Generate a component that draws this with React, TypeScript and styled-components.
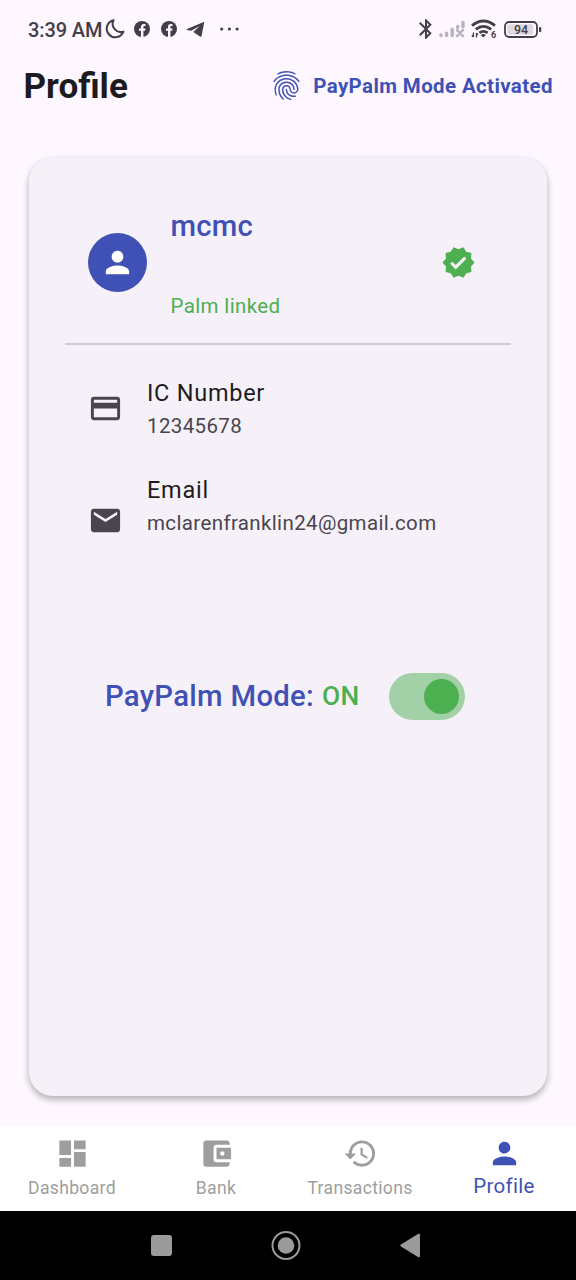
import React from "react";
import styled, { createGlobalStyle } from "styled-components";
import {
  MdAccountBalanceWallet, MdBluetooth, MdCreditCard, MdDashboard, MdEmail,
  MdFingerprint, MdHistory, MdPerson, MdVerified,
} from "react-icons/md";

const INDIGO = "#3f51b5";
const GREEN = "#4caf50";
const STATUS = "#443f47";

const Global = createGlobalStyle`
  * { box-sizing: border-box; }
  html, body { margin: 0; background: #fef7ff; }
  body { font-family: Roboto, "Liberation Sans", sans-serif; }
  svg { display: block; flex: none; }
`;

const Screen = styled.div`
  width: 576px;
  height: 1280px;
  display: flex;
  flex-direction: column;
  background: #fef7ff;
  overflow: hidden;
`;

const StatusBar = styled.div`
  height: 58px;
  padding: 0 34px 0 28px;
  display: flex;
  align-items: center;
  justify-content: space-between;
  color: ${STATUS};
`;

const StatusGroup = styled.div`
  display: flex;
  align-items: center;
`;

const Clock = styled.span`
  width: 77px;
  font-size: 20px;
  font-weight: 500;
  letter-spacing: -0.1px;
  line-height: 24px;
  padding-top: 2px;
  white-space: nowrap;
`;

const Header = styled.header`
  height: 56px;
  padding: 0 24px 0 23.5px;
  display: flex;
  align-items: center;
  justify-content: space-between;
`;

const Title = styled.h1`
  margin: -1px 0 0;
  font-size: 35.1px;
  font-weight: 700;
  color: #1d1b20;
`;

const ModeStatus = styled.div`
  display: flex;
  align-items: center;
  gap: 9px;
  margin-right: -0.8px;
  color: ${INDIGO};
  font-size: 20.5px;
  font-weight: 700;
  letter-spacing: 0.37px;
  white-space: nowrap;
  svg { margin-top: -1px; }
`;

const Card = styled.main`
  flex: 1;
  margin: 44px 29px 30px;
  padding: 47px 36px 0;
  border-radius: 24px;
  background: #f6f1f9;
  box-shadow: 0 4px 6px rgba(0, 0, 0, 0.22), 0 2px 9px rgba(0, 0, 0, 0.1);
`;

const UserRow = styled.section`
  height: 140px;
  padding: 0 35px 0 23px;
  display: flex;
  align-items: flex-start;
  border-bottom: 2px solid #cfc9dc;
`;

const Avatar = styled.div`
  width: 59px;
  height: 59px;
  margin: 27.5px 23.5px 0 0;
  border-radius: 50%;
  display: flex;
  align-items: center;
  justify-content: center;
  background: ${INDIGO};
  color: #fff;
`;

const UserText = styled.div`
  flex: 1;
  display: flex;
  flex-direction: column;
  gap: 44px;
  padding-top: 3px;
`;

const UserName = styled.div`
  font-size: 29.3px;
  line-height: 36px;
  font-weight: 500;
  letter-spacing: 0.2px;
  color: ${INDIGO};
`;

const LinkState = styled.div`
  font-size: 20.5px;
  line-height: 36px;
  letter-spacing: 0.37px;
  color: ${GREEN};
`;

const Verified = styled.div`
  margin-top: 39.5px;
  color: ${GREEN};
`;

const InfoRow = styled.section<{ $drop: number; $top: number }>`
  margin-top: ${(p) => p.$top}px;
  padding-left: 23px;
  display: flex;
  align-items: flex-start;
  gap: 24px;
  color: #49454f;
  svg { margin-top: ${(p) => p.$drop}px; }
`;

const InfoLabel = styled.div`
  font-size: 23.5px;
  line-height: 35px;
  letter-spacing: 0.73px;
  color: #1d1b20;
`;

const InfoValue = styled.div`
  font-size: 20.5px;
  line-height: 30px;
  letter-spacing: 0.37px;
`;

const ModeRow = styled.section`
  margin-top: 134.5px;
  padding-left: 40px;
  display: flex;
  align-items: center;
`;

const ModeLabel = styled.span`
  width: 217px;
  font-size: 29.3px;
  font-weight: 500;
  letter-spacing: 0.3px;
  white-space: nowrap;
  color: ${INDIGO};
`;

const ModeValue = styled.span`
  width: 67px;
  font-size: 26.4px;
  font-weight: 500;
  letter-spacing: 0.37px;
  color: ${GREEN};
`;

const SwitchTrack = styled.div`
  width: 76px;
  height: 47px;
  padding: 0 6px;
  border-radius: 24px;
  display: flex;
  align-items: center;
  justify-content: flex-end;
  background: #a2d1a7;
`;

const SwitchThumb = styled.div`
  width: 35px;
  height: 35px;
  border-radius: 50%;
  background: ${GREEN};
`;

const Tabs = styled.nav`
  height: 84.5px;
  display: grid;
  grid-template-columns: repeat(4, 1fr);
  background: #fff;
`;

const Tab = styled.div<{ $active?: boolean }>`
  padding-top: 10px;
  display: flex;
  flex-direction: column;
  align-items: center;
  color: ${(p) => (p.$active ? INDIGO : "#9e9e9e")};
  font-size: ${(p) => (p.$active ? 20.5 : 17.6)}px;
  letter-spacing: 0.3px;
  line-height: 24px;
`;

const TabText = styled.span<{ $active?: boolean }>`
  margin-top: ${(p) => (p.$active ? 3 : 5)}px;
`;

const SystemBar = styled.footer`
  height: 69.5px;
  background: #000;
  display: flex;
  align-items: center;
  justify-content: center;
`;

const Moon = () => (
  <svg width="20" height="20" viewBox="0 0 20 20" fill="none" stroke="currentColor" strokeWidth="2" strokeLinejoin="round">
    <path d="M8.6 1.2A8.6 8.6 0 1 0 18.4 12.6A8.1 8.1 0 0 1 8.6 1.2Z" />
  </svg>
);

const Facebook = () => (
  <svg width="16" height="16" viewBox="0 0 16 16">
    <circle cx="8" cy="8" r="8" fill="currentColor" />
    <path d="M7 16V9.7H5V7.4H7V5.9C7 3.9 8.1 2.9 9.9 2.9H11.5V5H10.3C9.6 5 9.4 5.4 9.4 6V7.4H11.5L11.1 9.7H9.4V16Z" fill="#fef7ff" />
  </svg>
);

const Telegram = () => (
  <svg width="19" height="17" viewBox="0 0 19 17" fill="currentColor">
    <path d="M1 8 17.2 1.2Q18.4.8 18.1 2.1L15.6 14.8Q15.3 16.3 14 15.5L7.3 10.9 13.9 4.9 5.2 9.8 1 8.9Q.1 8.4 1 8Z" />
  </svg>
);

const Dots = () => (
  <svg width="19" height="4" viewBox="0 0 19 4" fill="currentColor">
    <circle cx="1.7" cy="2" r="1.6" /><circle cx="9.4" cy="2" r="1.6" /><circle cx="17.1" cy="2" r="1.6" />
  </svg>
);

const Signal = () => (
  <svg width="26" height="18" viewBox="0 0 26 18" stroke="#b9b2bc" strokeWidth="3.4" strokeLinecap="round">
    <path d="M2 15.6V15M7.6 15.6V13.2M13.2 15.6V9.2M18.7 7.4V6.4M24 6.8V2.4" />
    <path d="m18 10.2 6 6M24 10.2l-6 6" strokeWidth="2.5" />
  </svg>
);

const WifiSvg = styled.svg`
  text { font: 700 9px Roboto, sans-serif; }
`;

const Wifi = () => (
  <WifiSvg width="26" height="20" viewBox="0 0 26 20" fill="none" stroke="currentColor" strokeWidth="2.8">
    <path d="M1 6.6Q12.5-2.6 24 6.6M4.8 10.4Q12.5 4.4 20.2 10.4M8.4 13.8Q12.5 10.9 16.6 13.8" />
    <path d="m12.3 18.6-2.6-2.6q2.6-1.9 5.2 0Z" fill="currentColor" stroke="none" />
    <path d="M2.4 13.5V18M.8 16.3 2.4 18M5.5 18.5V14M5.5 14l1.4 1.8" strokeWidth="1.3" />
    <text x="20" y="19" fill="currentColor" stroke="none">6</text>
  </WifiSvg>
);

const BatterySvg = styled.svg`
  text { font: 500 12.5px Roboto, sans-serif; }
`;

const Battery = () => (
  <BatterySvg width="38" height="17" viewBox="0 0 38 17">
    <rect x="1" y="1" width="32" height="15" rx="4.2" fill="none" stroke="currentColor" strokeWidth="1.8" />
    <rect x="3.3" y="3.3" width="26" height="10.4" rx="2" fill="#ded9e0" />
    <rect x="35" y="6" width="2.2" height="5" rx=".8" fill="currentColor" />
    <text x="17" y="13" textAnchor="middle" fill="currentColor">94</text>
  </BatterySvg>
);

const SystemKeys = () => (
  <svg width="576" height="69" viewBox="0 0 576 69" fill="#9b9b9b">
    <rect x="151" y="24" width="21" height="21" rx="3" />
    <circle cx="286" cy="34.5" r="13.5" fill="none" stroke="#9b9b9b" strokeWidth="2" />
    <circle cx="286" cy="34.5" r="8.3" />
    <path d="M401 33.5 418 23Q420 22 420 24V45Q420 47 418 46L401 35.5Q399.5 34.5 401 33.5Z" />
  </svg>
);

const Gap = styled.i<{ $w: number }>`
  width: ${(p) => p.$w}px;
`;

const tabs = [
  { label: "Dashboard", icon: MdDashboard },
  { label: "Bank", icon: MdAccountBalanceWallet },
  { label: "Transactions", icon: MdHistory },
  { label: "Profile", icon: MdPerson, active: true },
];

export default function App() {
  return (
    <Screen>
      <Global />
      <StatusBar>
        <StatusGroup>
          <Clock>3:39 AM</Clock>
          <Moon /><Gap $w={9} /><Facebook /><Gap $w={11} /><Facebook /><Gap $w={9} />
          <Telegram /><Gap $w={15} /><Dots />
        </StatusGroup>
        <StatusGroup>
          <MdBluetooth size={24} /><Gap $w={1} /><Signal /><Gap $w={6} /><Wifi /><Gap $w={7} /><Battery />
        </StatusGroup>
      </StatusBar>
      <Header>
        <Title>Profile</Title>
        <ModeStatus><MdFingerprint size={35} />PayPalm Mode Activated</ModeStatus>
      </Header>
      <Card>
        <UserRow>
          <Avatar><MdPerson size={35} /></Avatar>
          <UserText>
            <UserName>mcmc</UserName>
            <LinkState>Palm linked</LinkState>
          </UserText>
          <Verified><MdVerified size={35} /></Verified>
        </UserRow>
        <InfoRow $top={31} $drop={15}>
          <MdCreditCard size={35} />
          <div>
            <InfoLabel>IC Number</InfoLabel>
            <InfoValue>12345678</InfoValue>
          </div>
        </InfoRow>
        <InfoRow $top={32} $drop={30}>
          <MdEmail size={35} />
          <div>
            <InfoLabel>Email</InfoLabel>
            <InfoValue>mclarenfranklin24@gmail.com</InfoValue>
          </div>
        </InfoRow>
        <ModeRow>
          <ModeLabel>PayPalm Mode:</ModeLabel>
          <ModeValue>ON</ModeValue>
          <SwitchTrack><SwitchThumb /></SwitchTrack>
        </ModeRow>
      </Card>
      <Tabs>
        {tabs.map(({ label, icon: Icon, active }) => (
          <Tab key={label} $active={active}>
            <Icon size={35} />
            <TabText $active={active}>{label}</TabText>
          </Tab>
        ))}
      </Tabs>
      <SystemBar><SystemKeys /></SystemBar>
    </Screen>
  );
}
